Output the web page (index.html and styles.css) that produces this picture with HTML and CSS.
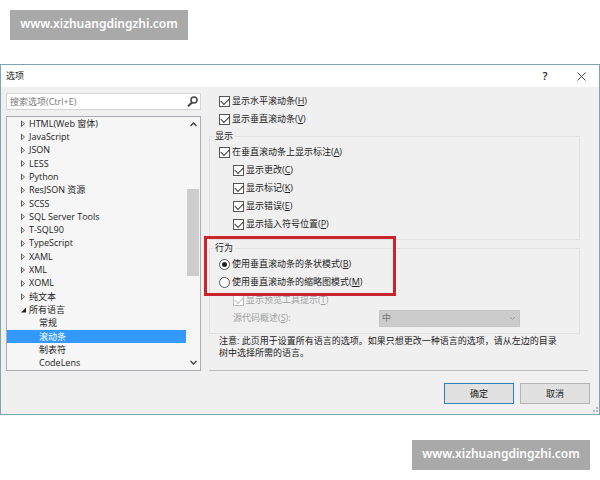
FILE: index.html
```html
<!DOCTYPE html>
<html>

<head>
    <meta charset="utf-8">
    <title>选项</title>
    <link rel="stylesheet" href="styles.css">
</head>

<body>
    <div class="site">www.xizhuangdingzhi.com</div>

    <div class="dialog">
        <div class="titlebar">
            <span class="title">选项</span>
            <button type="button" class="tool" aria-label="Help">?</button>
            <button type="button" class="tool" aria-label="Close">
                <svg width="9" height="9" viewBox="0 0 9 9"><path d="M.5 .5l8 8M8.5 .5l-8 8" /></svg>
            </button>
        </div>

        <div class="content">
            <div class="left">
                <div class="search">
                    <input type="text" placeholder="搜索选项(Ctrl+E)" aria-label="搜索选项">
                    <svg width="11" height="11" viewBox="0 0 11 11"><circle cx="7" cy="4" r="3" stroke-width="1.500" /><path d="M5 6.500L1 10.300" stroke-width="2" /></svg>
                </div>
                <div class="tree">
                    <ul>
                        <li class="closed">HTML(Web 窗体)</li>
                        <li class="closed">JavaScript</li>
                        <li class="closed">JSON</li>
                        <li class="closed">LESS</li>
                        <li class="closed">Python</li>
                        <li class="closed">ResJSON 资源</li>
                        <li class="closed">SCSS</li>
                        <li class="closed">SQL Server Tools</li>
                        <li class="closed">T-SQL90</li>
                        <li class="closed">TypeScript</li>
                        <li class="closed">XAML</li>
                        <li class="closed">XML</li>
                        <li class="closed">XOML</li>
                        <li class="closed">纯文本</li>
                        <li class="open">所有语言</li>
                        <li class="child">常规</li>
                        <li class="child selected">滚动条</li>
                        <li class="child">制表符</li>
                        <li class="child">CodeLens</li>
                    </ul>
                    <div class="scrollbar">
                        <svg width="7" height="5" viewBox="0 0 7 5"><path d="M.5 4l3-3 3 3" stroke-width="1.500" /></svg>
                        <div class="track"><div class="thumb"></div></div>
                        <svg width="7" height="5" viewBox="0 0 7 5"><path d="M.5 1l3 3 3-3" stroke-width="1.500" /></svg>
                    </div>
                </div>
            </div>

            <form class="right" id="options">
                <label class="row"><input type="checkbox" checked><span>显示水平滚动条(<u>H</u>)</span></label>
                <label class="row"><input type="checkbox" checked><span>显示垂直滚动条(<u>V</u>)</span></label>

                <fieldset>
                    <legend>显示</legend>
                    <label class="row"><input type="checkbox" checked><span>在垂直滚动条上显示标注(<u>A</u>)</span></label>
                    <label class="row sub"><input type="checkbox" checked><span>显示更改(<u>C</u>)</span></label>
                    <label class="row sub"><input type="checkbox" checked><span>显示标记(<u>K</u>)</span></label>
                    <label class="row sub"><input type="checkbox" checked><span>显示错误(<u>E</u>)</span></label>
                    <label class="row sub"><input type="checkbox" checked><span>显示插入符号位置(<u>P</u>)</span></label>
                </fieldset>

                <fieldset>
                    <legend>行为</legend>
                    <label class="row"><input type="radio" name="mode" checked><span>使用垂直滚动条的条状模式(<u>B</u>)</span></label>
                    <label class="row"><input type="radio" name="mode"><span>使用垂直滚动条的缩略图模式(<u>M</u>)</span></label>
                    <label class="row sub disabled"><input type="checkbox" checked disabled><span>显示预览工具提示(<u>T</u>)</span></label>
                    <div class="row sub disabled">
                        <label class="source" for="overview">源代码概述(<u>S</u>):</label>
                        <div class="select">
                            <select id="overview" disabled>
                                <option>中</option>
                            </select>
                            <svg width="7" height="5" viewBox="0 0 7 5"><path d="M1 1l2.500 2.500L6 1" /></svg>
                        </div>
                    </div>
                    <div class="highlight"></div>
                </fieldset>

                <p class="note">注意: 此页用于设置所有语言的选项。如果只想更改一种语言的选项，请从左边的目录树中选择所需的语言。</p>
            </form>
        </div>

        <div class="buttons">
            <button type="submit" form="options" class="button default">确定</button>
            <button type="button" class="button">取消</button>
        </div>
        <svg class="grip" width="6" height="6" viewBox="0 0 6 6"><path d="M4 0h2v2h-2zM4 3h2v2h-2zM1 3h2v2h-2z" /></svg>
    </div>

    <div class="site bottom">www.xizhuangdingzhi.com</div>
</body>

</html>
```

FILE: styles.css
```css
* {
    box-sizing: border-box;
}

body {
    margin: 0;
    padding: 10px 0;
    background: #fff;
    color: #222;
    font-family: "Open Sans", "Noto Sans CJK SC", sans-serif;
    font-size: 9px;
    line-height: 12px;
}

input,
select,
button {
    margin: 0;
    padding: 0;
    color: inherit;
    font: inherit;
}

svg {
    flex: none;
    fill: none;
    stroke: #444;
}

.site {
    width: 178px;
    margin-left: 10px;
    background: #a9a9a9;
    color: #fff;
    font-family: "Noto Sans", sans-serif;
    font-size: 12px;
    font-weight: 600;
    line-height: 28px;
    padding-bottom: 2px;
    text-align: center;
}

.site.bottom {
    margin: 25px 10px 0 auto;
}

.dialog {
    position: relative;
    margin-top: 24px;
    border: 1px solid #7fa3b3;
    background: #f0f0f0;
}

.titlebar {
    display: flex;
    align-items: center;
    height: 22px;
    padding: 0 9px 0 5px;
    background: #fff;
}

.title {
    flex: 1;
}

.tool {
    display: flex;
    align-items: center;
    justify-content: center;
    width: 18px;
    height: 18px;
    margin-left: 18px;
    border: 0;
    background: none;
    font-size: 11px;
    font-weight: 600;
}

.content {
    display: flex;
    gap: 8px;
    padding: 5px 11px 0 5px;
}

.left {
    display: flex;
    flex-direction: column;
    gap: 6px;
    width: 195px;
    padding-top: 1px;
}

.search {
    display: flex;
    align-items: center;
    height: 17px;
    padding: 0 2px 0 3px;
    border: 1px solid #d5d5d5;
    background: #fff;
}

.search input {
    flex: 1;
    min-width: 0;
    border: 0;
    outline: 0;
    background: none;
}

.search input::placeholder {
    color: #777;
}

.tree {
    display: flex;
    flex: 1;
    border: 1px solid #aaadb3;
    background: #f6f6f6;
}

.tree ul {
    display: flex;
    flex: 1;
    flex-direction: column;
    margin: 0;
    padding: 0;
    list-style: none;
}

.tree li {
    display: flex;
    flex: 1;
    align-items: center;
    padding-left: 14px;
}

.tree li.child {
    padding-left: 32px;
}

.tree li.selected {
    background: #3399ff;
    color: #fff;
}

.closed::before,
.open::before {
    content: "";
    width: 4px;
    height: 7px;
    margin-right: 4px;
    background: #555;
}

.closed::before {
    clip-path: polygon(0 0, 100% 50%, 0 100%, 0 0, 25% 25%, 25% 75%, 75% 50%, 25% 25%);
}

.open::before {
    width: 5px;
    height: 5px;
    margin-right: 3px;
    background: #222;
    clip-path: polygon(100% 0, 100% 100%, 0 100%);
}

.scrollbar {
    display: flex;
    flex-direction: column;
    align-items: center;
    width: 14px;
    padding: 5px 0;
}

.track {
    flex: 1;
    width: 12px;
    padding: 62px 0;
}

.thumb {
    height: 87px;
    background: #cdcdcd;
}

.right {
    flex: 1;
    border-bottom: 1px solid #bbb;
}

.row {
    display: flex;
    align-items: center;
    height: 18px;
    padding-left: 10px;
    white-space: nowrap;
}

.row.sub {
    padding-left: 24px;
}

.row.disabled {
    color: #a0a0a0;
}

u {
    text-underline-offset: 1px;
}

input[type="checkbox"],
input[type="radio"] {
    display: flex;
    flex: none;
    align-items: center;
    justify-content: center;
    width: 11px;
    height: 11px;
    margin-right: 2px;
    border: 1px solid #555;
    background: #fff;
    appearance: none;
}

input[type="radio"] {
    border-radius: 50%;
}

input[type="checkbox"]:checked::before {
    content: "";
    width: 7px;
    height: 4px;
    margin-bottom: 2px;
    border: solid #333;
    border-width: 0 0 1px 1px;
    transform: rotate(-45deg);
}

input[type="radio"]:checked::before {
    content: "";
    width: 5px;
    height: 5px;
    border-radius: 50%;
    background: #222;
}

input[type="checkbox"]:disabled,
input[type="checkbox"]:disabled::before {
    border-color: #bbb;
}

fieldset {
    position: relative;
    min-width: 0;
    margin: 2px 8px 0 0;
    padding: 1px 0 6px;
    border: 1px solid #e0e0e0;
}

fieldset .row {
    padding-left: 9px;
}

fieldset .row.sub {
    padding-left: 23px;
}

legend {
    margin-left: 4px;
    padding: 0 2px 0 1px;
}

.source {
    flex: 0 0 146px;
}

.select {
    position: relative;
    width: 141px;
}

.select select {
    display: block;
    width: 100%;
    height: 17px;
    padding-left: 2px;
    border: 1px solid #c5c5c5;
    border-radius: 0;
    background: #ccc;
    color: #777;
    opacity: 1;
    appearance: none;
}

.select svg {
    position: absolute;
    top: 6px;
    right: 4px;
    stroke: #999;
}

/* frame over the two scroll bar modes */
.highlight {
    position: absolute;
    top: -18px;
    left: -6px;
    width: 192px;
    height: 60px;
    border: 3px solid #c9252d;
    pointer-events: none;
}

.note {
    margin: 0;
    padding: 1px 28px 11px 10px;
}

.buttons {
    display: flex;
    justify-content: flex-end;
    gap: 6px;
    padding: 12px 9px 10px;
}

.button {
    width: 70px;
    height: 21px;
    border: 1px solid #b5b5b5;
    background: #e1e1e1;
}

.button.default {
    border: 1px solid #2f7fb8;
}

.grip {
    position: absolute;
    right: 1px;
    bottom: 1px;
    fill: #bbb;
    stroke: none;
}
```
